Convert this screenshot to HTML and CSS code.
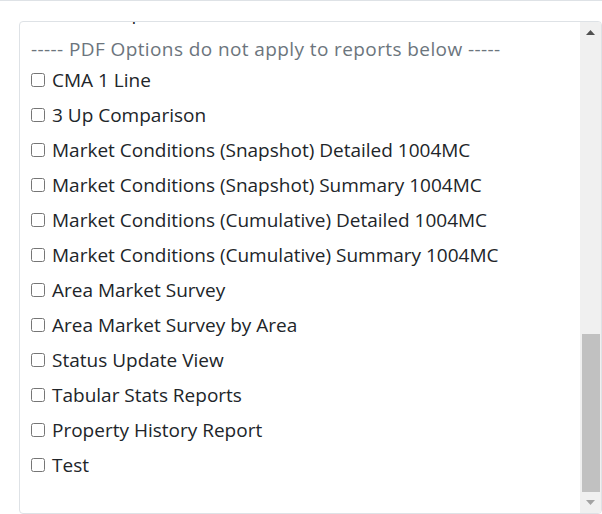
FILE: index.html
```html
<!DOCTYPE html>
<html lang="en">
<head>
    <meta charset="UTF-8">
    <meta name="viewport" content="width=device-width, initial-scale=1.0">
    <title>Reports</title>
    <link rel="stylesheet" href="styles.css">
</head>
<body>
    <div class="page">
        <div class="report-box">
            <div class="report-list">
                <label class="report-item"><input type="checkbox"> Office Report</label>

                <div class="pdf-note">----- PDF Options do not apply to reports below -----</div>

                <label class="report-item"><input type="checkbox"> CMA 1 Line</label>
                <label class="report-item"><input type="checkbox"> 3 Up Comparison</label>
                <label class="report-item"><input type="checkbox"> Market Conditions (Snapshot) Detailed 1004MC</label>
                <label class="report-item"><input type="checkbox"> Market Conditions (Snapshot) Summary 1004MC</label>
                <label class="report-item"><input type="checkbox"> Market Conditions (Cumulative) Detailed 1004MC</label>
                <label class="report-item"><input type="checkbox"> Market Conditions (Cumulative) Summary 1004MC</label>
                <label class="report-item"><input type="checkbox"> Area Market Survey</label>
                <label class="report-item"><input type="checkbox"> Area Market Survey by Area</label>
                <label class="report-item"><input type="checkbox"> Status Update View</label>
                <label class="report-item"><input type="checkbox"> Tabular Stats Reports</label>
                <label class="report-item"><input type="checkbox"> Property History Report</label>
                <label class="report-item"><input type="checkbox"> Test</label>
            </div>

            <div class="scrollbar">
                <div class="scroll-btn">
                    <svg width="9" height="5" viewBox="0 0 9 5"><path d="M4.5 0L9 5H0z" fill="#505050"/></svg>
                </div>
                <div class="scroll-track">
                    <div class="scroll-thumb"></div>
                </div>
                <div class="scroll-btn">
                    <svg width="9" height="5" viewBox="0 0 9 5"><path d="M0 0H9L4.5 5z" fill="#a3a3a3"/></svg>
                </div>
            </div>
        </div>
    </div>
</body>
</html>
```

FILE: styles.css
```css
body {
    margin: 0;
    font-family: 'Open Sans', 'Noto Sans', sans-serif;
    color: #212529;
    background-color: #fff;
}

.page {
    border-top: 1px solid #dee2e6;
    padding: 20px 0 0 19px;
}

.report-box {
    display: flex;
    width: 583px;
    height: 493px;
    box-sizing: border-box;
    border: 1px solid #dee2e6;
    border-radius: 4px;
    overflow: hidden;
}

/* list is shown scrolled to its end */
.report-list {
    flex: 1;
    display: flex;
    flex-direction: column;
    justify-content: flex-end;
    overflow: hidden;
    padding: 0 0 31px 11px;
}

.report-item {
    display: flex;
    align-items: center;
    flex-shrink: 0;
    height: 35px;
    font-size: 19px;
    white-space: nowrap;
}

.report-item input {
    width: 14px;
    height: 14px;
    margin: 0 7px 0 0;
}

.pdf-note {
    flex-shrink: 0;
    margin-top: 7px;
    height: 25px;
    line-height: 25px;
    font-size: 19px;
    letter-spacing: 0.4px;
    color: #6c757d;
    white-space: nowrap;
}

.scrollbar {
    width: 21px;
    display: flex;
    flex-direction: column;
    background-color: #f0f0f0;
}

.scroll-btn {
    height: 21px;
    display: flex;
    align-items: center;
    justify-content: center;
}

.scroll-btn svg {
    display: block;
}

.scroll-track {
    flex: 1;
    display: flex;
    flex-direction: column;
    justify-content: flex-end;
    padding: 0 1px 0 2px;
}

.scroll-thumb {
    height: 158px;
    background-color: #c1c1c1;
}
```
